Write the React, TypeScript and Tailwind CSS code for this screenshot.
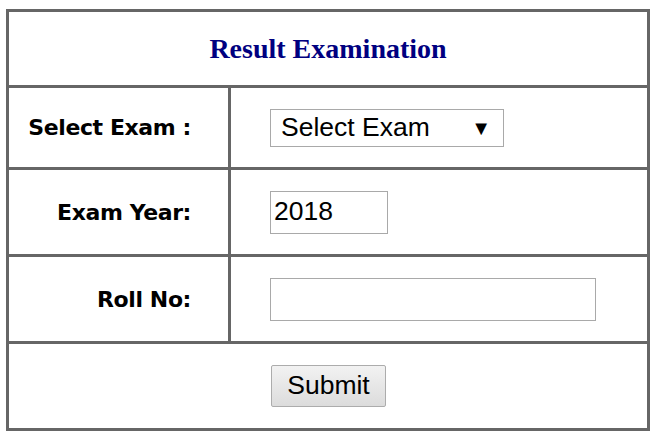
import React from 'react';

const LABEL_FONT = "font-['DejaVu_Sans',Verdana,sans-serif]";
const FIELD_FONT = "font-['Liberation_Sans',Arial,sans-serif]";

type RowProps = {
  label: string;
  height: string;
  children: React.ReactNode;
};

const FormRow: React.FC<RowProps> = ({ label, height, children }) => (
  <div className={`flex border-t-[3px] border-[#666] ${height}`}>
    <div
      className={`w-[222px] shrink-0 border-r-[3px] border-[#666] flex items-center justify-end pr-[37px] text-[22px] tracking-[-0.4px] font-bold text-black ${LABEL_FONT}`}
    >
      {label}
    </div>
    <div className="flex-1 flex items-center pl-[39px]">{children}</div>
  </div>
);

export default function App() {
  return (
    <div className="w-[660px] h-[440px] bg-white pt-[9px] pl-[6px]">
      <div className="w-[644px] border-[3px] border-[#666] bg-white">
        <div className="h-[73px] flex items-center justify-center">
          <h1 className="text-[28px] font-bold text-[#000080] font-['Liberation_Serif','Times_New_Roman',serif]">
            Result Examination
          </h1>
        </div>

        <FormRow label="Select Exam :" height="h-[82px]">
          <div
            className={`w-[234px] h-[38px] border border-[#a9a9a9] bg-white flex items-center justify-between pl-[10px] pr-[12px] text-[26.5px] text-black ${FIELD_FONT}`}
          >
            <span>Select Exam</span>
            <span className="text-[20px] leading-none">▼</span>
          </div>
        </FormRow>

        <FormRow label="Exam Year:" height="h-[87px]">
          <div
            className={`w-[118px] h-[43px] border border-[#a9a9a9] bg-white flex items-center pl-[3px] text-[26.5px] text-black ${FIELD_FONT}`}
          >
            2018
          </div>
        </FormRow>

        <FormRow label="Roll No:" height="h-[87px]">
          <div className="w-[326px] h-[43px] border border-[#a9a9a9] bg-white" />
        </FormRow>

        <div className="h-[87px] border-t-[3px] border-[#666] flex items-center justify-center">
          <button
            className={`w-[115px] h-[42px] ml-[1px] rounded-[2px] border border-[#acacac] bg-gradient-to-b from-[#f2f2f2] to-[#dcdcdc] text-[26.5px] text-black ${FIELD_FONT}`}
          >
            Submit
          </button>
        </div>
      </div>
    </div>
  );
}
